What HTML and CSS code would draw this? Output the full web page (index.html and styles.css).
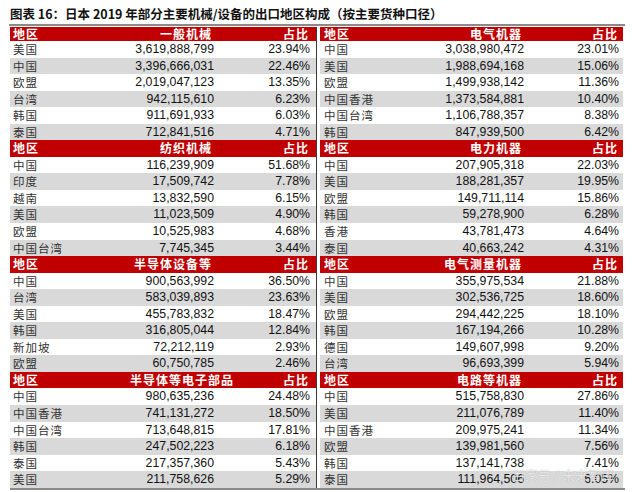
FILE: index.html
```html
<!DOCTYPE html>
<html lang="zh">
<head>
<meta charset="utf-8">
<title>图表 16</title>
<link rel="stylesheet" href="styles.css">
</head>
<body>
<div class="page">
  <div class="title">图表 16：日本 2019 年部分主要机械/设备的出口地区构成（按主要货种口径）</div>
  <div class="rule"></div>
  <div class="tables">
    <div class="tbl tbl-left">
      <div class="row hd first"><span class="c1">地区</span><span class="c2">一般机械</span><span class="c3">占比</span></div>
      <div class="row"><span class="c1">美国</span><span class="c2">3,619,888,799</span><span class="c3">23.94%</span></div>
      <div class="row alt"><span class="c1">中国</span><span class="c2">3,396,666,031</span><span class="c3">22.46%</span></div>
      <div class="row"><span class="c1">欧盟</span><span class="c2">2,019,047,123</span><span class="c3">13.35%</span></div>
      <div class="row alt"><span class="c1">台湾</span><span class="c2">942,115,610</span><span class="c3">6.23%</span></div>
      <div class="row"><span class="c1">韩国</span><span class="c2">911,691,933</span><span class="c3">6.03%</span></div>
      <div class="row alt"><span class="c1">泰国</span><span class="c2">712,841,516</span><span class="c3">4.71%</span></div>

      <div class="row hd"><span class="c1">地区</span><span class="c2">纺织机械</span><span class="c3">占比</span></div>
      <div class="row"><span class="c1">中国</span><span class="c2">116,239,909</span><span class="c3">51.68%</span></div>
      <div class="row alt"><span class="c1">印度</span><span class="c2">17,509,742</span><span class="c3">7.78%</span></div>
      <div class="row"><span class="c1">越南</span><span class="c2">13,832,590</span><span class="c3">6.15%</span></div>
      <div class="row alt"><span class="c1">美国</span><span class="c2">11,023,509</span><span class="c3">4.90%</span></div>
      <div class="row"><span class="c1">欧盟</span><span class="c2">10,525,983</span><span class="c3">4.68%</span></div>
      <div class="row alt"><span class="c1">中国台湾</span><span class="c2">7,745,345</span><span class="c3">3.44%</span></div>

      <div class="row hd"><span class="c1">地区</span><span class="c2">半导体设备等</span><span class="c3">占比</span></div>
      <div class="row"><span class="c1">中国</span><span class="c2">900,563,992</span><span class="c3">36.50%</span></div>
      <div class="row alt"><span class="c1">台湾</span><span class="c2">583,039,893</span><span class="c3">23.63%</span></div>
      <div class="row"><span class="c1">美国</span><span class="c2">455,783,832</span><span class="c3">18.47%</span></div>
      <div class="row alt"><span class="c1">韩国</span><span class="c2">316,805,044</span><span class="c3">12.84%</span></div>
      <div class="row"><span class="c1">新加坡</span><span class="c2">72,212,119</span><span class="c3">2.93%</span></div>
      <div class="row alt"><span class="c1">欧盟</span><span class="c2">60,750,785</span><span class="c3">2.46%</span></div>

      <div class="row hd"><span class="c1">地区</span><span class="c2">半导体等电子部品</span><span class="c3">占比</span></div>
      <div class="row"><span class="c1">中国</span><span class="c2">980,635,236</span><span class="c3">24.48%</span></div>
      <div class="row alt"><span class="c1">中国香港</span><span class="c2">741,131,272</span><span class="c3">18.50%</span></div>
      <div class="row"><span class="c1">中国台湾</span><span class="c2">713,648,815</span><span class="c3">17.81%</span></div>
      <div class="row alt"><span class="c1">韩国</span><span class="c2">247,502,223</span><span class="c3">6.18%</span></div>
      <div class="row"><span class="c1">泰国</span><span class="c2">217,357,360</span><span class="c3">5.43%</span></div>
      <div class="row alt"><span class="c1">美国</span><span class="c2">211,758,626</span><span class="c3">5.29%</span></div>
    </div>

    <div class="tbl tbl-right">
      <div class="row hd first"><span class="c1">地区</span><span class="c2">电气机器</span><span class="c3">占比</span></div>
      <div class="row"><span class="c1">中国</span><span class="c2">3,038,980,472</span><span class="c3">23.01%</span></div>
      <div class="row alt"><span class="c1">美国</span><span class="c2">1,988,694,168</span><span class="c3">15.06%</span></div>
      <div class="row"><span class="c1">欧盟</span><span class="c2">1,499,938,142</span><span class="c3">11.36%</span></div>
      <div class="row alt"><span class="c1">中国香港</span><span class="c2">1,373,584,881</span><span class="c3">10.40%</span></div>
      <div class="row"><span class="c1">中国台湾</span><span class="c2">1,106,788,357</span><span class="c3">8.38%</span></div>
      <div class="row alt"><span class="c1">韩国</span><span class="c2">847,939,500</span><span class="c3">6.42%</span></div>

      <div class="row hd"><span class="c1">地区</span><span class="c2">电力机器</span><span class="c3">占比</span></div>
      <div class="row"><span class="c1">中国</span><span class="c2">207,905,318</span><span class="c3">22.03%</span></div>
      <div class="row alt"><span class="c1">美国</span><span class="c2">188,281,357</span><span class="c3">19.95%</span></div>
      <div class="row"><span class="c1">欧盟</span><span class="c2">149,711,114</span><span class="c3">15.86%</span></div>
      <div class="row alt"><span class="c1">韩国</span><span class="c2">59,278,900</span><span class="c3">6.28%</span></div>
      <div class="row"><span class="c1">香港</span><span class="c2">43,781,473</span><span class="c3">4.64%</span></div>
      <div class="row alt"><span class="c1">泰国</span><span class="c2">40,663,242</span><span class="c3">4.31%</span></div>

      <div class="row hd"><span class="c1">地区</span><span class="c2">电气测量机器</span><span class="c3">占比</span></div>
      <div class="row"><span class="c1">中国</span><span class="c2">355,975,534</span><span class="c3">21.88%</span></div>
      <div class="row alt"><span class="c1">美国</span><span class="c2">302,536,725</span><span class="c3">18.60%</span></div>
      <div class="row"><span class="c1">欧盟</span><span class="c2">294,442,225</span><span class="c3">18.10%</span></div>
      <div class="row alt"><span class="c1">韩国</span><span class="c2">167,194,266</span><span class="c3">10.28%</span></div>
      <div class="row"><span class="c1">德国</span><span class="c2">149,607,998</span><span class="c3">9.20%</span></div>
      <div class="row alt"><span class="c1">台湾</span><span class="c2">96,693,399</span><span class="c3">5.94%</span></div>

      <div class="row hd"><span class="c1">地区</span><span class="c2">电路等机器</span><span class="c3">占比</span></div>
      <div class="row"><span class="c1">中国</span><span class="c2">515,758,830</span><span class="c3">27.86%</span></div>
      <div class="row alt"><span class="c1">美国</span><span class="c2">211,076,789</span><span class="c3">11.40%</span></div>
      <div class="row"><span class="c1">中国香港</span><span class="c2">209,975,241</span><span class="c3">11.34%</span></div>
      <div class="row alt"><span class="c1">欧盟</span><span class="c2">139,981,560</span><span class="c3">7.56%</span></div>
      <div class="row"><span class="c1">韩国</span><span class="c2">137,141,738</span><span class="c3">7.41%</span></div>
      <div class="row alt"><span class="c1">泰国</span><span class="c2">111,964,506</span><span class="c3">6.05%</span></div>
    </div>
  </div>
  <div class="rule bottom"></div>
  <div class="watermark">百家号 / 未来智库</div>
</div>
</body>
</html>
```

FILE: styles.css
```css
html, body {
  margin: 0;
  padding: 0;
  background: #ffffff;
}

.page {
  position: relative;
  width: 640px;
  height: 492px;
  padding-left: 10px;
  box-sizing: border-box;
  overflow: hidden;
}

.title {
  height: 19px;
  padding-top: 5px;
  line-height: 17px;
  font-family: "Noto Sans CJK SC", "Liberation Sans", sans-serif;
  font-weight: bold;
  font-size: 12.5px;
  color: #111111;
  white-space: nowrap;
}

.rule {
  height: 2px;
  width: 616px;
  margin-left: -1px;
  background: #8a8a8a;
}

.tables {
  display: flex;
  margin-top: 1px;
}

.tbl {
  display: flex;
  flex-direction: column;
}

.tbl-left {
  width: 306px;
  border-right: 1px solid #3a3a3a;
  margin-right: 3px;
}

.tbl-right {
  width: 303px;
}

.row {
  display: grid;
  height: 16.55px;
  line-height: 16.55px;
  align-items: center;
  background: #ffffff;
  white-space: nowrap;
}

.tbl-left .row {
  grid-template-columns: 117px 84px 1fr;
  padding: 0 6px 0 3px;
}

.tbl-right .row {
  grid-template-columns: 116px 84px 1fr;
  padding: 0 4px 0 4px;
}

.row.alt {
  background: #d9d9d9;
}

.row.hd {
  background: #c00000;
  color: #ffffff;
  font-family: "Noto Sans CJK SC", sans-serif;
  font-weight: bold;
  font-size: 12px;
}

.row.hd.first {
  height: 14px;
  line-height: 14px;
}

.c1 {
  font-family: "Noto Sans CJK SC", sans-serif;
  font-size: 11.5px;
  color: #333333;
  letter-spacing: 1px;
}

.c2, .c3 {
  text-align: right;
  font-family: "Liberation Sans", Arial, sans-serif;
  font-size: 12.3px;
  color: #111111;
}

.row.hd .c1,
.row.hd .c2,
.row.hd .c3 {
  font-family: "Noto Sans CJK SC", sans-serif;
  font-size: 12px;
  color: #ffffff;
  font-weight: bold;
  letter-spacing: 1px;
}

.row.hd .c2 {
  padding-right: 2px;
}

.row.hd .c3 {
  padding-right: 1px;
}

.rule.bottom {
  width: 615px;
  margin-left: 0;
  margin-top: 0;
}

.watermark {
  position: absolute;
  left: 512px;
  top: 465px;
  font-family: "Noto Sans CJK SC", sans-serif;
  font-size: 13px;
  color: rgba(255, 255, 255, 0.7);
  text-shadow: 0 0 1px rgba(120, 120, 120, 0.5);
  white-space: nowrap;
}
```
